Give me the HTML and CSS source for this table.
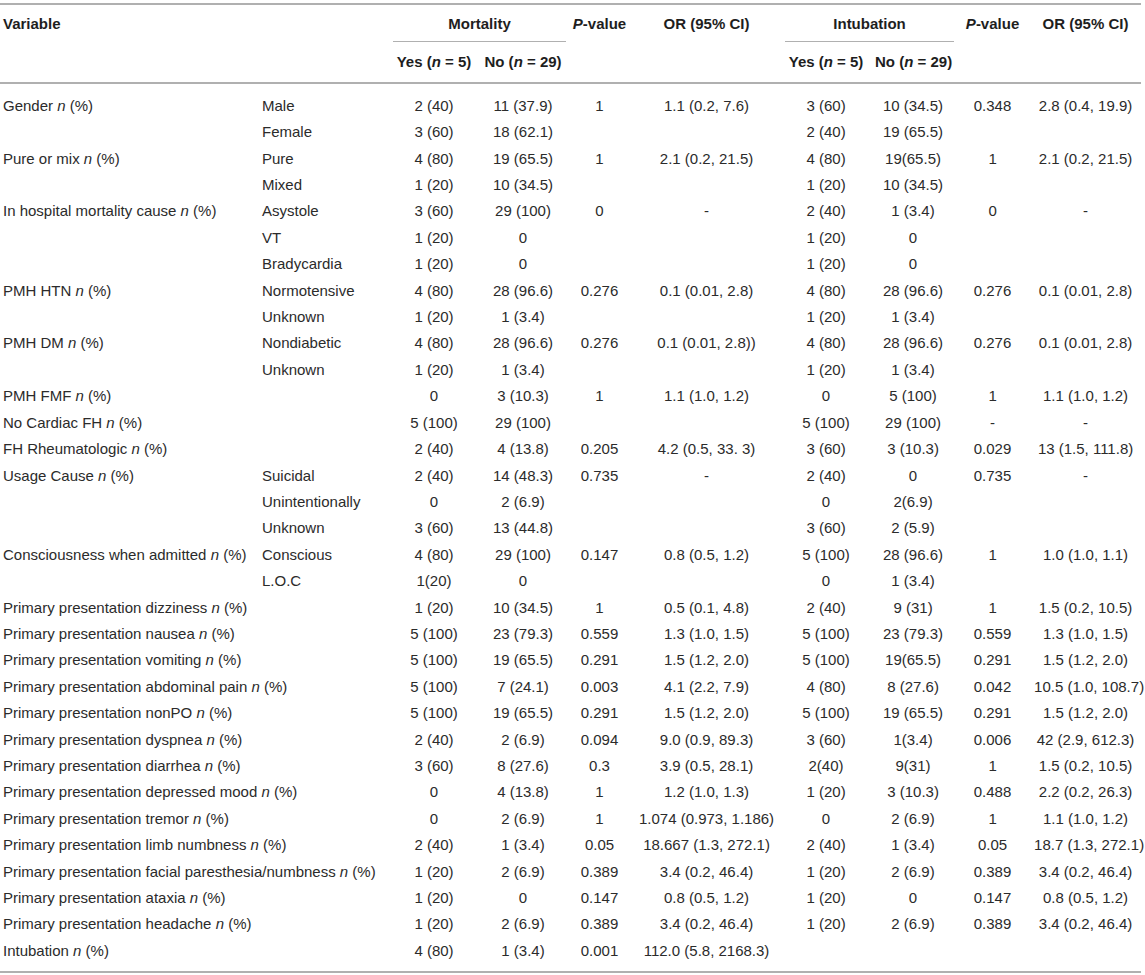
FILE: index.html
```html
<!DOCTYPE html>
<html lang="en">

<head>
    <meta charset="UTF-8">
    <title>Mortality and intubation</title>
    <link rel="stylesheet" href="styles.css">
</head>

<body>

    <table class="results">
        <colgroup>
            <col class="c-var">
            <col class="c-sub">
            <col class="c-yes">
            <col class="c-no">
            <col class="c-p">
            <col class="c-or">
            <col class="c-yes2">
            <col class="c-no2">
            <col class="c-p2">
            <col class="c-or2">
        </colgroup>
        <thead>
            <tr>
                <th rowspan="2" colspan="2" class="left">Variable</th>
                <th colspan="2" class="group"><div>Mortality</div></th>
                <th rowspan="2"><i>P</i>-value</th>
                <th rowspan="2">OR (95% CI)</th>
                <th colspan="2" class="group"><div>Intubation</div></th>
                <th rowspan="2"><i>P</i>-value</th>
                <th rowspan="2">OR (95% CI)</th>
            </tr>
            <tr>
                <th class="sub">Yes (<i>n</i> = 5)</th>
                <th class="sub">No (<i>n</i> = 29)</th>
                <th class="sub">Yes (<i>n</i> = 5)</th>
                <th class="sub">No (<i>n</i> = 29)</th>
            </tr>
        </thead>
        <tbody>
            <tr><td class="left">Gender <i>n</i> (%)</td><td class="left">Male</td><td>2 (40)</td><td>11 (37.9)</td><td>1</td><td>1.1 (0.2, 7.6)</td><td>3 (60)</td><td>10 (34.5)</td><td>0.348</td><td>2.8 (0.4, 19.9)</td></tr>
            <tr><td class="left"></td><td class="left">Female</td><td>3 (60)</td><td>18 (62.1)</td><td></td><td></td><td>2 (40)</td><td>19 (65.5)</td><td></td><td></td></tr>
            <tr><td class="left">Pure or mix <i>n</i> (%)</td><td class="left">Pure</td><td>4 (80)</td><td>19 (65.5)</td><td>1</td><td>2.1 (0.2, 21.5)</td><td>4 (80)</td><td>19(65.5)</td><td>1</td><td>2.1 (0.2, 21.5)</td></tr>
            <tr><td class="left"></td><td class="left">Mixed</td><td>1 (20)</td><td>10 (34.5)</td><td></td><td></td><td>1 (20)</td><td>10 (34.5)</td><td></td><td></td></tr>
            <tr><td class="left">In hospital mortality cause <i>n</i> (%)</td><td class="left">Asystole</td><td>3 (60)</td><td>29 (100)</td><td>0</td><td>-</td><td>2 (40)</td><td>1 (3.4)</td><td>0</td><td>-</td></tr>
            <tr><td class="left"></td><td class="left">VT</td><td>1 (20)</td><td>0</td><td></td><td></td><td>1 (20)</td><td>0</td><td></td><td></td></tr>
            <tr><td class="left"></td><td class="left">Bradycardia</td><td>1 (20)</td><td>0</td><td></td><td></td><td>1 (20)</td><td>0</td><td></td><td></td></tr>
            <tr><td class="left">PMH HTN <i>n</i> (%)</td><td class="left">Normotensive</td><td>4 (80)</td><td>28 (96.6)</td><td>0.276</td><td>0.1 (0.01, 2.8)</td><td>4 (80)</td><td>28 (96.6)</td><td>0.276</td><td>0.1 (0.01, 2.8)</td></tr>
            <tr><td class="left"></td><td class="left">Unknown</td><td>1 (20)</td><td>1 (3.4)</td><td></td><td></td><td>1 (20)</td><td>1 (3.4)</td><td></td><td></td></tr>
            <tr><td class="left">PMH DM <i>n</i> (%)</td><td class="left">Nondiabetic</td><td>4 (80)</td><td>28 (96.6)</td><td>0.276</td><td>0.1 (0.01, 2.8))</td><td>4 (80)</td><td>28 (96.6)</td><td>0.276</td><td>0.1 (0.01, 2.8)</td></tr>
            <tr><td class="left"></td><td class="left">Unknown</td><td>1 (20)</td><td>1 (3.4)</td><td></td><td></td><td>1 (20)</td><td>1 (3.4)</td><td></td><td></td></tr>
            <tr><td class="left" colspan="2">PMH FMF <i>n</i> (%)</td><td>0</td><td>3 (10.3)</td><td>1</td><td>1.1 (1.0, 1.2)</td><td>0</td><td>5 (100)</td><td>1</td><td>1.1 (1.0, 1.2)</td></tr>
            <tr><td class="left" colspan="2">No Cardiac FH <i>n</i> (%)</td><td>5 (100)</td><td>29 (100)</td><td></td><td></td><td>5 (100)</td><td>29 (100)</td><td>-</td><td>-</td></tr>
            <tr><td class="left" colspan="2">FH Rheumatologic <i>n</i> (%)</td><td>2 (40)</td><td>4 (13.8)</td><td>0.205</td><td>4.2 (0.5, 33. 3)</td><td>3 (60)</td><td>3 (10.3)</td><td>0.029</td><td>13 (1.5, 111.8)</td></tr>
            <tr><td class="left">Usage Cause <i>n</i> (%)</td><td class="left">Suicidal</td><td>2 (40)</td><td>14 (48.3)</td><td>0.735</td><td>-</td><td>2 (40)</td><td>0</td><td>0.735</td><td>-</td></tr>
            <tr><td class="left"></td><td class="left">Unintentionally</td><td>0</td><td>2 (6.9)</td><td></td><td></td><td>0</td><td>2(6.9)</td><td></td><td></td></tr>
            <tr><td class="left"></td><td class="left">Unknown</td><td>3 (60)</td><td>13 (44.8)</td><td></td><td></td><td>3 (60)</td><td>2 (5.9)</td><td></td><td></td></tr>
            <tr><td class="left">Consciousness when admitted <i>n</i> (%)</td><td class="left">Conscious</td><td>4 (80)</td><td>29 (100)</td><td>0.147</td><td>0.8 (0.5, 1.2)</td><td>5 (100)</td><td>28 (96.6)</td><td>1</td><td>1.0 (1.0, 1.1)</td></tr>
            <tr><td class="left"></td><td class="left">L.O.C</td><td>1(20)</td><td>0</td><td></td><td></td><td>0</td><td>1 (3.4)</td><td></td><td></td></tr>
            <tr><td class="left" colspan="2">Primary presentation dizziness <i>n</i> (%)</td><td>1 (20)</td><td>10 (34.5)</td><td>1</td><td>0.5 (0.1, 4.8)</td><td>2 (40)</td><td>9 (31)</td><td>1</td><td>1.5 (0.2, 10.5)</td></tr>
            <tr><td class="left" colspan="2">Primary presentation nausea <i>n</i> (%)</td><td>5 (100)</td><td>23 (79.3)</td><td>0.559</td><td>1.3 (1.0, 1.5)</td><td>5 (100)</td><td>23 (79.3)</td><td>0.559</td><td>1.3 (1.0, 1.5)</td></tr>
            <tr><td class="left" colspan="2">Primary presentation vomiting <i>n</i> (%)</td><td>5 (100)</td><td>19 (65.5)</td><td>0.291</td><td>1.5 (1.2, 2.0)</td><td>5 (100)</td><td>19(65.5)</td><td>0.291</td><td>1.5 (1.2, 2.0)</td></tr>
            <tr><td class="left" colspan="2">Primary presentation abdominal pain <i>n</i> (%)</td><td>5 (100)</td><td>7 (24.1)</td><td>0.003</td><td>4.1 (2.2, 7.9)</td><td>4 (80)</td><td>8 (27.6)</td><td>0.042</td><td>10.5 (1.0, 108.7)</td></tr>
            <tr><td class="left" colspan="2">Primary presentation nonPO <i>n</i> (%)</td><td>5 (100)</td><td>19 (65.5)</td><td>0.291</td><td>1.5 (1.2, 2.0)</td><td>5 (100)</td><td>19 (65.5)</td><td>0.291</td><td>1.5 (1.2, 2.0)</td></tr>
            <tr><td class="left" colspan="2">Primary presentation dyspnea <i>n</i> (%)</td><td>2 (40)</td><td>2 (6.9)</td><td>0.094</td><td>9.0 (0.9, 89.3)</td><td>3 (60)</td><td>1(3.4)</td><td>0.006</td><td>42 (2.9, 612.3)</td></tr>
            <tr><td class="left" colspan="2">Primary presentation diarrhea <i>n</i> (%)</td><td>3 (60)</td><td>8 (27.6)</td><td>0.3</td><td>3.9 (0.5, 28.1)</td><td>2(40)</td><td>9(31)</td><td>1</td><td>1.5 (0.2, 10.5)</td></tr>
            <tr><td class="left" colspan="2">Primary presentation depressed mood <i>n</i> (%)</td><td>0</td><td>4 (13.8)</td><td>1</td><td>1.2 (1.0, 1.3)</td><td>1 (20)</td><td>3 (10.3)</td><td>0.488</td><td>2.2 (0.2, 26.3)</td></tr>
            <tr><td class="left" colspan="2">Primary presentation tremor <i>n</i> (%)</td><td>0</td><td>2 (6.9)</td><td>1</td><td>1.074 (0.973, 1.186)</td><td>0</td><td>2 (6.9)</td><td>1</td><td>1.1 (1.0, 1.2)</td></tr>
            <tr><td class="left" colspan="2">Primary presentation limb numbness <i>n</i> (%)</td><td>2 (40)</td><td>1 (3.4)</td><td>0.05</td><td>18.667 (1.3, 272.1)</td><td>2 (40)</td><td>1 (3.4)</td><td>0.05</td><td>18.7 (1.3, 272.1)</td></tr>
            <tr><td class="left" colspan="2">Primary presentation facial paresthesia/numbness <i>n</i> (%)</td><td>1 (20)</td><td>2 (6.9)</td><td>0.389</td><td>3.4 (0.2, 46.4)</td><td>1 (20)</td><td>2 (6.9)</td><td>0.389</td><td>3.4 (0.2, 46.4)</td></tr>
            <tr><td class="left" colspan="2">Primary presentation ataxia <i>n</i> (%)</td><td>1 (20)</td><td>0</td><td>0.147</td><td>0.8 (0.5, 1.2)</td><td>1 (20)</td><td>0</td><td>0.147</td><td>0.8 (0.5, 1.2)</td></tr>
            <tr><td class="left" colspan="2">Primary presentation headache <i>n</i> (%)</td><td>1 (20)</td><td>2 (6.9)</td><td>0.389</td><td>3.4 (0.2, 46.4)</td><td>1 (20)</td><td>2 (6.9)</td><td>0.389</td><td>3.4 (0.2, 46.4)</td></tr>
            <tr><td class="left" colspan="2">Intubation <i>n</i> (%)</td><td>4 (80)</td><td>1 (3.4)</td><td>0.001</td><td>112.0 (5.8, 2168.3)</td><td></td><td></td><td></td><td></td></tr>
        </tbody>
    </table>

</body>

</html>
```

FILE: styles.css
```css
* {
    margin: 0;
    box-sizing: border-box;
}

body {
    font-family: "Liberation Sans", Arial, sans-serif;
    font-size: 15px;
    color: #2b2b2b;
    background-color: #ffffff;
    padding: 3px 0 0 0;
}

.results {
    width: 1141px;
    table-layout: fixed;
    border-collapse: collapse;
    border-top: 2px solid #b0b0b0;
    border-bottom: 2px solid #b0b0b0;
}

.c-var { width: 256px; }
.c-sub { width: 133px; }
.c-yes { width: 90px; }
.c-no { width: 88px; }
.c-p { width: 65px; }
.c-or { width: 149px; }
.c-yes2 { width: 90px; }
.c-no2 { width: 84px; }
.c-p2 { width: 75px; }
.c-or2 { width: 111px; }

th,
td {
    padding: 4px 4px;
    line-height: 18.4px;
    text-align: center;
    white-space: nowrap;
    vertical-align: top;
}

th {
    font-weight: bold;
    color: #1e1e1e;
    padding-top: 10px;
    padding-bottom: 8px;
}

th i,
td i {
    font-style: italic;
}

.left {
    text-align: left;
    padding-left: 3px;
}

td.left + td.left {
    padding-left: 6px;
}

th.group {
    padding: 10px 0 0 0;
}

th.group div {
    margin: 0 1px 0 4px;
    padding-bottom: 8px;
    border-bottom: 1px solid #b0b0b0;
}

th.sub {
    padding-top: 11px;
    padding-bottom: 10px;
}

thead tr:last-child th,
thead th[rowspan] {
    border-bottom: 2px solid #b0b0b0;
}

tbody tr:first-child td {
    padding-top: 13px;
}

tbody tr:last-child td {
    padding-bottom: 11px;
}
```
